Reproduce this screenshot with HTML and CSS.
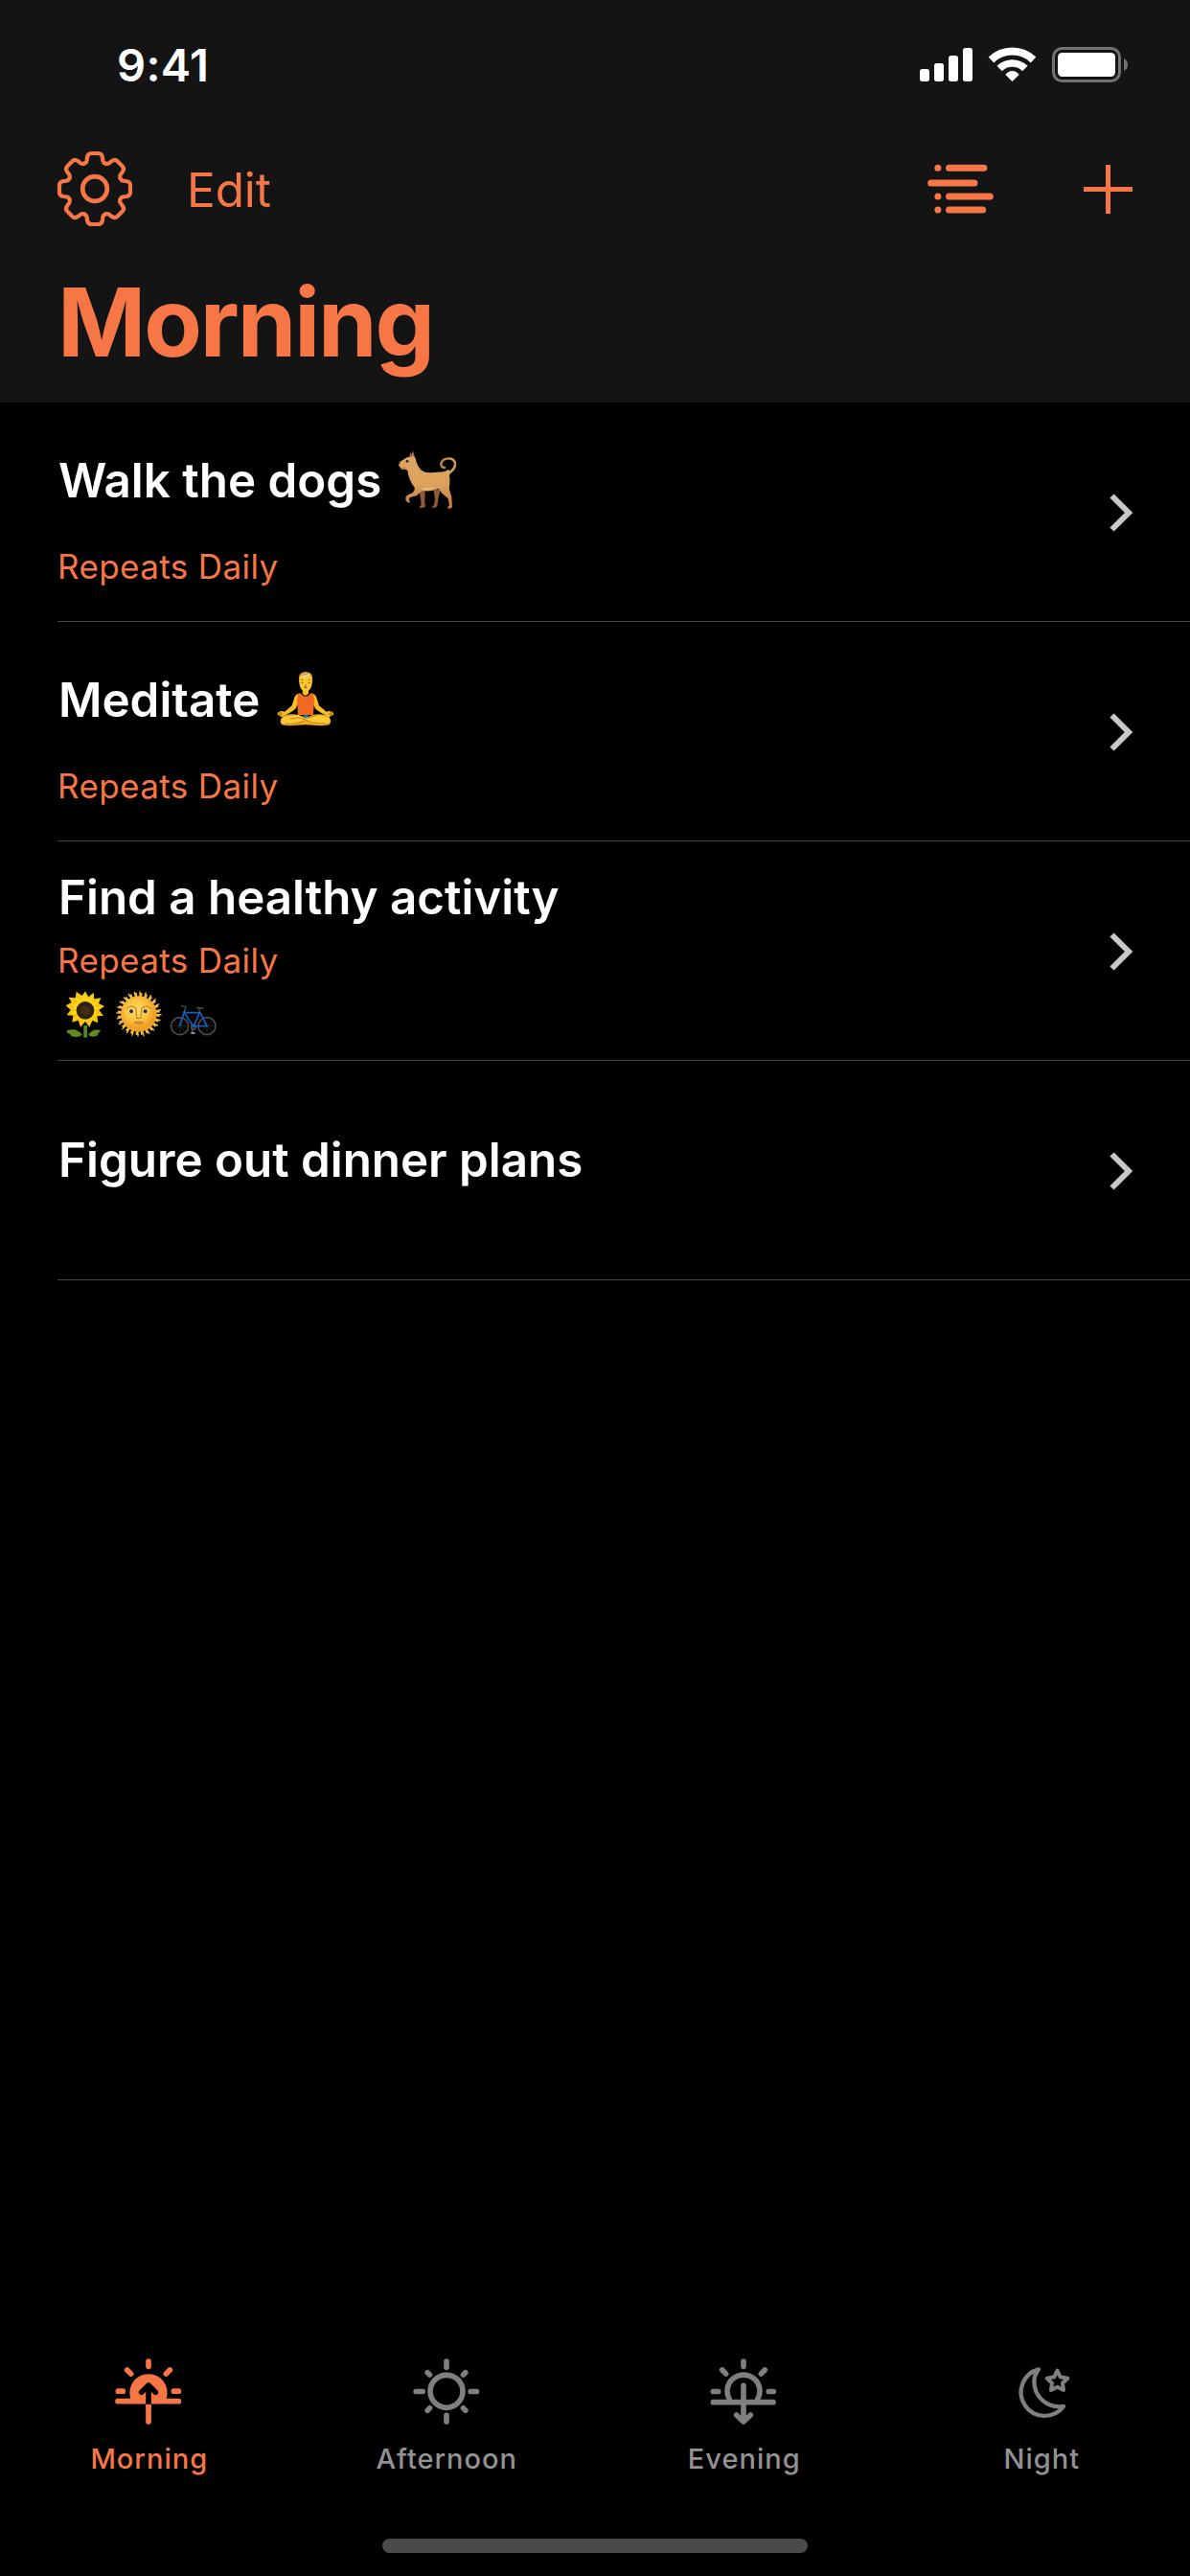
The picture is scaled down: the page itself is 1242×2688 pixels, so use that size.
FILE: index.html
```html
<!DOCTYPE html>
<html lang="en">
<head>
<meta charset="utf-8">
<title>Morning</title>
<link rel="stylesheet" href="styles.css">
</head>
<body>
<header class="header">
  <div class="status">
    <span class="status-time">9:41</span>
    <svg class="status-icons" viewBox="180 147 651 111" aria-hidden="true">
      <g fill="#fff">
        <rect x="180" y="216" width="30" height="39" rx="8"/>
        <rect x="225" y="198" width="30" height="57" rx="8"/>
        <rect x="270" y="174" width="30" height="81" rx="8"/>
        <rect x="315" y="150" width="30" height="105" rx="8"/>
        <path d="M469.5 255L448 234Q457 222 469.5 222T491 234Z"/>
        <rect x="612" y="165" width="180" height="75" rx="14"/>
      </g>
      <g fill="none" stroke="#fff">
        <path stroke-width="24" d="M403.500 187.500A95 95 0 0 1 535.500 187.500"/>
        <path stroke-width="23" d="M429.500 214.500A57 57 0 0 1 509.500 214.500"/>
      </g>
      <rect x="598.500" y="151.500" width="207" height="102" rx="27" fill="none" stroke="#727272" stroke-width="9"/>
      <path fill="#727272" d="M819 183Q831 189 831 202.500T819 222Z"/>
    </svg>
  </div>
  <nav class="nav">
    <svg class="gear" viewBox="-117 -117 234 234" fill="none" stroke="currentColor" stroke-linecap="round" stroke-linejoin="round" aria-label="Settings">
      <defs><path id="tooth" d="M-32.900 -79.500L-31 -80.300Q-26 -82.500 -25 -89L-24 -98Q-22 -111 -11 -111H11Q22 -111 24 -98L25 -89Q26 -82.500 31 -80.300L32.900 -79.500"/></defs>
      <g stroke-width="12.500">
        <use href="#tooth"/>
        <use href="#tooth" transform="rotate(45)"/>
        <use href="#tooth" transform="rotate(90)"/>
        <use href="#tooth" transform="rotate(135)"/>
        <use href="#tooth" transform="rotate(180)"/>
        <use href="#tooth" transform="rotate(225)"/>
        <use href="#tooth" transform="rotate(270)"/>
        <use href="#tooth" transform="rotate(315)"/>
      </g>
      <circle r="38.500" stroke-width="14"/>
    </svg>
    <span class="edit">Edit</span>
    <svg class="list-icon" viewBox="203 513 207 156" fill="none" stroke="currentColor" stroke-width="21" stroke-linecap="round" aria-label="Reorder">
      <path d="M235.500 525.500h.01M270.500 525.500H379.500M214 573H350M235.500 615h.01M270.500 615H399M235.500 657h.01M270.500 657H376"/>
    </svg>
    <svg class="plus" viewBox="0 0 51 51" fill="none" stroke="currentColor" stroke-width="5" aria-label="Add">
      <path d="M0 25.500H51M25.500 0V51"/>
    </svg>
  </nav>
  <h1 class="title">Morning</h1>
</header>

<main class="list">
  <div class="row">
    <div class="text">
      <div class="name"><span>Walk the dogs</span>
        <svg class="emoji" viewBox="45 46 186 186" role="img" aria-label="dog">
          <defs>
            <linearGradient id="fur" x1="0" y1="0" x2="0" y2="1">
              <stop offset="0" stop-color="#d9a566"/><stop offset=".55" stop-color="#dca25a"/><stop offset="1" stop-color="#b87844"/>
            </linearGradient>
          </defs>
          <g fill="#8f5a35">
            <path d="M113 170L131 168L130 210L132 221Q130 227 114 226Q112 221 119 216Z"/>
            <path d="M157 166L178 170L173 195L169 221Q166 227 153 226Q152 221 159 216L162 198Z"/>
          </g>
          <path d="M203 116Q224 106 225 89Q224 72 205 71Q184 72 181 88Q181 99 192 100" fill="none" stroke="#c4884e" stroke-width="7" stroke-linecap="round"/>
          <path d="M203 119Q224 108 226 89Q224 74 208 71" fill="none" stroke="#d19a5d" stroke-width="6"/>
          <path fill="#a96b55" d="M82 71L84 52L89 60L93 46L99 69Z"/>
          <path fill="url(#fur)" d="M48 84L66 73Q72 67 81 66Q89 70 94 62L101 71Q104 91 118 107Q130 117 148 116L188 113Q198 110 204 106L212 114Q205 121 208 132Q209 149 206 166Q210 177 214 192L216 223Q214 230 203 228Q200 224 207 218L203 197Q184 183 172 165Q143 178 124 171Q112 179 105 188Q91 191 82 194L81 202Q85 205 82 210Q76 211 70 202L71 190Q78 184 92 179Q101 170 97 160Q80 140 76 108Q69 107 66 103Q53 105 52 98Q47 92 48 84Z"/>
          <path fill="#c98e51" d="M55 99Q65 100 71 96L73 102Q64 107 57 105Z"/>
          <path fill="#e9bd7f" d="M121 170Q145 175 171 161Q145 163 125 163Z" opacity=".8"/>
          <circle cx="75" cy="80" r="4" fill="#29180f"/>
          <path fill="#352522" d="M47 84l7-1-2 6q-5 1-5-5Z"/>
        </svg>
      </div>
      <div class="repeat">Repeats Daily</div>
    </div>
    <svg class="chevron" viewBox="0 0 24 40"><path d="M2.500 2.500L20 20L2.500 37.500"/></svg>
  </div>
  <div class="row">
    <div class="text">
      <div class="name"><span>Meditate</span>
        <svg class="emoji" viewBox="24 27 186 186" role="img" aria-label="person in lotus position">
          <g fill="#f7bd24">
            <path d="M93 101Q83 105 80 120L74 139L51 158Q43 154 34 158Q25 163 31 169L43 175L53 169Q76 158 86 148L96 125Z"/>
            <path d="M140 101Q150 105 153 120L159 139L182 158Q190 154 199 158Q208 163 202 169L190 175L180 169Q157 158 147 148L137 125Z"/>
            <path d="M108 88H126V101Q117 113 107 101Z"/>
          </g>
          <path fill="#fac92f" d="M96 60Q98 34 118 35Q138 35 138 61Q137 92 117 98Q98 92 96 60Z"/>
          <path fill="#d9a24e" d="M96 61Q92 34 117 33Q142 34 138 61L133 46Q112 50 101 47Z"/>
          <path d="M104 47Q119 48 131 41" fill="none" stroke="#f4dfa4" stroke-width="4"/>
          <path fill="#f06a22" d="M94 101Q98 99 103 101L108 107Q117 112 126 107L131 101Q137 99 141 101L144 123L141 168H93L90 123Z"/>
          <path fill="#f2aa21" d="M92 167Q53 163 42 177Q33 190 43 199Q56 204 117 199Q178 204 190 199Q200 189 192 176Q178 163 142 167L118 176Z"/>
          <path fill="#facb36" d="M92 168L48 175Q40 183 43 193Q73 201 98 189L143 169L187 174Q194 180 190 192Q167 200 136 193L92 168Z"/>
          <path fill="none" stroke="#c98018" stroke-width="3" d="M68 181Q96 173 111 181Q134 196 180 195M124 178L151 169M54 195Q88 199 111 188"/>
          <path fill="#2581b9" d="M109 169H126L121 178H114Z"/>
          <g fill="none" stroke="#8d6115" stroke-width="2.500">
            <path d="M101 67h9M124 67h9M102 58h8M124 58h8M114 74q3 3 6 0"/>
            <circle cx="38" cy="165" r="4"/><circle cx="195" cy="165" r="4"/>
          </g>
          <ellipse cx="117" cy="82" rx="5" ry="3" fill="#a4552d"/>
        </svg>
      </div>
      <div class="repeat">Repeats Daily</div>
    </div>
    <svg class="chevron" viewBox="0 0 24 40"><path d="M2.500 2.500L20 20L2.500 37.500"/></svg>
  </div>
  <div class="row row-notes">
    <div class="text">
      <div class="name"><span>Find a healthy activity</span></div>
      <div class="repeat">Repeats Daily</div>
      <div class="notes">
        <svg class="small-emoji" viewBox="42 39 150 150" role="img" aria-label="sunflower">
          <path fill="#4c8a22" d="M112 150h11v38h-11Z"/>
          <path fill="#5e8c1e" d="M60 165Q91 156 107 179Q96 190 73 184Q71 175 60 174ZM166 165Q139 158 126 180Q139 189 154 182Q158 173 166 165Z"/>
          <path fill="#f6c60f" d="M117 43l10 18 16-14 2 20 21-3-7 17 18 9-17 12 14 18-20 1 3 21-18-7-9 20-13-17-15 17-7-21-19 6 3-21-20-1 12-17-15-13 18-10-9-16 21 2 3-20 18 13Z"/>
          <path fill="#fadb22" d="M119 50l7 20 14-12-1 21 20-7-12 18 18 6-18 9 8 18-17-7-3 19-13-13-10 19-7-20-17 11 4-19-20 0 13-15-13-13 20-5-5-18 18 8 3-18 9 13Z" opacity=".7"/>
          <circle cx="117" cy="103" r="28" fill="#30210d"/>
          <circle cx="117" cy="103" r="16" fill="#3c2f12"/>
        </svg>
        <svg class="small-emoji" viewBox="207 39 150 150" role="img" aria-label="sun with face">
          <defs><radialGradient id="sunface" cx=".45" cy=".4"><stop offset="0" stop-color="#ffdb62"/><stop offset=".65" stop-color="#fac13d"/><stop offset="1" stop-color="#ed9f27"/></radialGradient></defs>
          <g stroke="#f3bd43" fill="none">
            <circle cx="284.500" cy="114" r="59" stroke-width="14" stroke-dasharray="8.450 7"/>
            <circle cx="284.500" cy="114" r="67" stroke-width="8" stroke-dasharray="4 13.540"/>
          </g>
          <circle cx="284.500" cy="114" r="56" fill="url(#sunface)"/>
          <path fill="none" stroke="#c58b25" stroke-width="4" d="M246 98Q257 84 275 96L278 121M291 121L294 96Q310 84 324 98M274 124Q284 132 294 124"/>
          <ellipse cx="261" cy="106" rx="9" ry="6" fill="#e8e5cf"/><ellipse cx="306" cy="106" rx="9" ry="6" fill="#e8e5cf"/>
          <circle cx="261" cy="106" r="6" fill="#2f2b35"/><circle cx="305" cy="106" r="6" fill="#2f2b35"/>
          <path fill="#e6a331" stroke="#bd7926" stroke-width="3" d="M270 141Q284 135 298 141Q284 151 270 141Z"/>
        </svg>
        <svg class="small-emoji bike" viewBox="381 39 150 150" role="img" aria-label="bicycle">
          <g fill="none" stroke="#4c4c50" stroke-width="5">
            <circle cx="413" cy="152" r="27"/><circle cx="498" cy="152" r="27"/>
            <path stroke-width="1.500" stroke="#424246" d="M386 152h54M413 125v54M394 133l38 38M432 133l-38 38M471 152h54M498 125v54M479 133l38 38M517 133l-38 38"/>
            <path d="M417 89L432 91L428 103M464 95L488 96M474 97V106" stroke-width="4"/>
            <circle cx="456" cy="155" r="7"/><path d="M454 158L452 173"/>
          </g>
          <path d="M413 152L429 102M427 110H475L456 155L427 110M475 106L498 152H457" fill="none" stroke="#175db8" stroke-width="5" stroke-linejoin="round"/>
          <path d="M448 174h12" stroke="#b0b0b5" stroke-width="5"/>
        </svg>
      </div>
    </div>
    <svg class="chevron" viewBox="0 0 24 40"><path d="M2.500 2.500L20 20L2.500 37.500"/></svg>
  </div>
  <div class="row row-plain">
    <div class="text">
      <div class="name"><span>Figure out dinner plans</span></div>
    </div>
    <svg class="chevron" viewBox="0 0 24 40"><path d="M2.500 2.500L20 20L2.500 37.500"/></svg>
  </div>
</main>

<footer class="footer">
  <div class="tabs">
    <div class="tab tab-active">
      <svg class="tab-icon" viewBox="122 90 210 210" fill="none" stroke="currentColor" stroke-width="17" stroke-linecap="round">
        <path fill="currentColor" stroke="none" d="M171 219A59 59 0 1 1 283 219Z"/>
        <path d="M131 227H321M227 244V291M227 102V118M160 129L172 141M294 129L282 141M132 195.500H147M306 195.500H321"/>
        <path stroke="#000" stroke-linejoin="round" d="M205 199L227 177L249 199"/>
        <path stroke="#000" stroke-linecap="butt" d="M227 180V236"/>
        <path stroke-linecap="butt" d="M227 237V250"/>
      </svg>
      <span>Morning</span>
    </div>
    <div class="tab">
      <svg class="tab-icon" viewBox="1051.500 90 210 210" fill="none" stroke="currentColor" stroke-width="17" stroke-linecap="round">
        <circle cx="1156.500" cy="196" r="51"/>
        <path d="M1156.500 102V121M1156.500 271V291M1061 196.500H1082M1232 196.500H1251M1097 137L1104 144M1216 137L1209 144M1097 255.500L1104 248.500M1216 255.500L1209 248.500"/>
      </svg>
      <span>Afternoon</span>
    </div>
    <div class="tab">
      <svg class="tab-icon" viewBox="182 90 210 210" fill="none" stroke="currentColor" stroke-width="17" stroke-linecap="round" stroke-linejoin="round">
        <path d="M243.500 222A51 51 0 1 1 330.500 222M192 230H380M287 178V290M265 270L287 291L309 270M287 102V118M220 129L232 141M354 129L342 141M192 196.500H208M366 196.500H381"/>
      </svg>
      <span>Evening</span>
    </div>
    <div class="tab">
      <svg class="tab-icon" viewBox="1115 90 210 210" fill="none" stroke="currentColor" stroke-width="13" stroke-linejoin="round">
        <path d="M1211 127A74 74 0 1 0 1289 243C1240 250 1197 215 1197 165C1197 150 1202 138 1211 127Z"/>
        <path stroke-width="12" d="M1269.500 131L1279 151L1302 155L1286 170L1289 192L1269.500 182L1250 192L1253 170L1237 155L1260 151Z"/>
      </svg>
      <span>Night</span>
    </div>
  </div>
  <div class="home"></div>
</footer>
</body>
</html>
```
FILE: styles.css
```css
* { box-sizing: border-box; }
body {
  margin: 0;
  min-height: 2688px;
  display: flex;
  flex-direction: column;
  background: #000;
  color: #fff;
  font-family: Inter, "Liberation Sans", sans-serif;
}
svg { display: block; flex: none; overflow: visible; }

.header { height: 420px; background: #141414; color: #f67745; }
.status {
  height: 132px;
  padding: 3px 65px 0 122px;
  display: flex;
  align-items: center;
  justify-content: space-between;
  color: #fff;
}
.status-time { font-size: 47px; font-weight: 600; letter-spacing: .4px; }
.status-icons { width: 217px; height: 37px; }
.nav { height: 130px; padding: 0 60px; display: flex; align-items: center; }
.gear { width: 78px; height: 78px; margin-right: 57px; }
.edit { font-size: 49.5px; line-height: 60px; letter-spacing: -.1px; padding-top: 2px; margin-right: auto; }
.list-icon { width: 69px; height: 52px; margin-right: 94px; }
.plus { width: 51px; height: 51px; }
.title {
  margin: 14px 0 0 60px;
  font-size: 99px;
  line-height: 120px;
  font-weight: 700;
  letter-spacing: -2.1px;
}

.row {
  height: 229px;
  margin-left: 60px;
  padding: 51px 60px 0 0;
  display: flex;
  justify-content: space-between;
  border-bottom: 1px solid #444446;
}
.row-notes { padding-top: 28px; }
.row-plain { padding-top: 73px; }
.name {
  display: flex;
  align-items: center;
  height: 60px;
  padding-left: 1px;
  font-size: 49.3px;
  font-weight: 600;
  line-height: 60px;
}
.repeat {
  margin-top: 38px;
  font-size: 35px;
  line-height: 44px;
  letter-spacing: .4px;
  color: #f67745;
}
.row-notes .repeat { margin-top: 14px; }
.emoji { width: 62px; height: 62px; margin-left: 17px; }
.notes { display: flex; margin: 9px 0 0 4px; gap: 5px; }
.small-emoji { width: 50px; height: 50px; }
.bike { margin-left: 3px; }
.chevron {
  width: 24px;
  height: 40px;
  margin-top: 44px;
  fill: none;
  stroke: #c7c7cc;
  stroke-width: 6;
}
.row-notes .chevron { margin-top: 67px; }
.row-plain .chevron { margin-top: 22px; }

.footer {
  margin-top: auto;
  height: 228px;
  display: flex;
  flex-direction: column;
  justify-content: space-between;
}
.tabs { display: grid; grid-template-columns: repeat(4, 1fr); }
.tab {
  display: flex;
  flex-direction: column;
  align-items: center;
  gap: 18px;
  color: #7f7f7f;
  font-size: 29px;
  font-weight: 450;
  line-height: 36px;
  letter-spacing: 1px;
}
.tab span { padding-left: 1px; color: #929292; }
.tab.tab-active, .tab.tab-active span { color: #f67745; }
.tab-icon { width: 70px; height: 70px; }
.home {
  width: 444px;
  height: 15px;
  margin: 0 auto 24px;
  border-radius: 8px;
  background: #4a4a4a;
}
```
